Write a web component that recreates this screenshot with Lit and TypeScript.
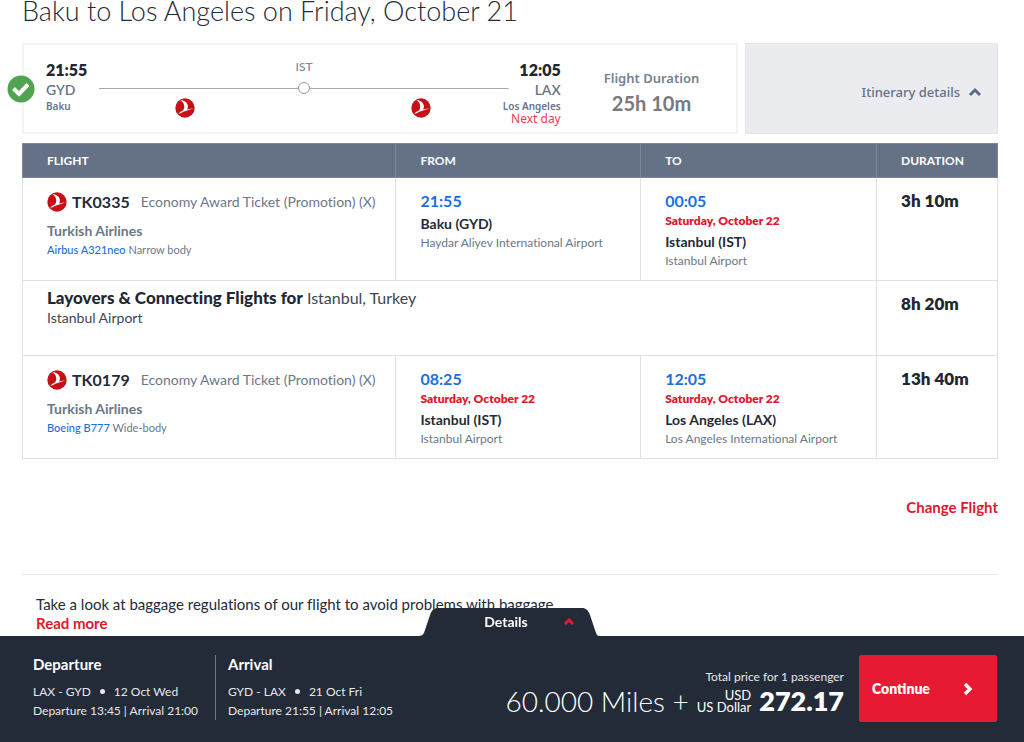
import { LitElement, html, css, svg, nothing } from "lit";
import { customElement, property, state } from "lit/decorators.js";

interface Stop {
  time: string;
  date?: string;
  city: string;
  airport: string;
}

interface Leg {
  flight: string;
  cabin: string;
  carrier: string;
  aircraft: string;
  body: string;
  from: Stop;
  to: Stop;
  duration: string;
}

const FIRST: Leg = {
  flight: "TK0335",
  cabin: "Economy Award Ticket (Promotion) (X)",
  carrier: "Turkish Airlines",
  aircraft: "Airbus A321neo",
  body: "Narrow body",
  from: { time: "21:55", city: "Baku (GYD)", airport: "Haydar Aliyev International Airport" },
  to: { time: "00:05", date: "Saturday, October 22", city: "Istanbul (IST)", airport: "Istanbul Airport" },
  duration: "3h 10m",
};

const SECOND: Leg = {
  flight: "TK0179",
  cabin: "Economy Award Ticket (Promotion) (X)",
  carrier: "Turkish Airlines",
  aircraft: "Boeing B777",
  body: "Wide-body",
  from: { time: "08:25", date: "Saturday, October 22", city: "Istanbul (IST)", airport: "Istanbul Airport" },
  to: { time: "12:05", date: "Saturday, October 22", city: "Los Angeles (LAX)", airport: "Los Angeles International Airport" },
  duration: "13h 40m",
};

const logo = html`<svg class="logo" viewBox="0 0 20 20" aria-hidden="true">
  <circle cx="10" cy="10" r="9.7" fill="#c70f17" />
  <path fill="#fff" d="M5.400 2.300C9.500 2.200 12.600 4.800 12.900 8c.1 1.400-.3 2.600-1 3.600l6.800-1.300c-3.800 1.600-7.600 2.300-10.600 3.600-1.800.8-3.200 1.600-4.900 1.900 1.400-1.600 3.200-2.600 4.900-3.300 1-1.600 1.400-3.500.9-5.500-.4-1.900-1.600-3.500-3.600-4.700z" />
</svg>`;

@customElement("flight-summary")
export class FlightSummary extends LitElement {
  @property({ type: Boolean }) open = true;

  static styles = css`
    :host { display: grid; grid-template-columns: minmax(0, 717fr) minmax(0, 253fr); gap: 7px; }
    .card {
      position: relative; box-sizing: border-box; min-height: 91px; padding: 15px 22px 0;
      border: 2px solid #f4f4f5; display: grid;
      grid-template-columns: auto minmax(0, 1fr) auto auto; background: #fff;
    }
    .check { position: absolute; left: -17px; top: 30px; width: 28px; height: 28px; display: block; }
    .end { display: flex; flex-direction: column; color: #687586; font-size: 14px; line-height: 20px; }
    .end.to { align-items: flex-end; }
    .time { font-size: 16px; font-weight: 800; color: #1f2733; }
    .city { font: 600 10px/13px "Noto Sans", sans-serif; }
    .next { font: 400 12px/12px "Noto Sans", sans-serif; color: #ee3a55; }
    .code { font-weight: 600; font-size: 14px; }
    .track { margin: 0 -6px 0 12px; display: flex; flex-direction: column; }
    .via { text-align: center; font-size: 12px; line-height: 14px; color: #808895; font-weight: 500; }
    .line { height: 12px; margin-top: 8px; display: flex; align-items: center; justify-content: center;
      background: linear-gradient(#a8a8a8, #a8a8a8) center / 100% 1px no-repeat; }
    .dot { width: 10px; height: 10px; border: 1px solid #999; border-radius: 50%; background: #fff; }
    .legs { display: flex; justify-content: space-between; padding: 4px 78px 0 76px; }
    .logo { width: 20px; height: 20px; display: block; }
    .total { margin: 0; padding: 9px 15px 0 43px; text-align: center; }
    .total dt { font: 600 13px/18px "Noto Sans", sans-serif; color: #768191; }
    .total dd { margin: 3px 0 0; font-size: 20px; line-height: 26px; font-weight: 700; color: #77797c; }
    .toggle {
      box-sizing: border-box; border: 1px solid #e6e6e8; background: #ebecef; padding: 6px 15px 0;
      display: flex; align-items: center; justify-content: flex-end; gap: 8px;
      font: 500 13px/18px "Noto Sans", sans-serif; color: #647185; cursor: pointer;
    }
    .toggle svg { width: 14px; height: 10px; }
  `;

  render() {
    return html`
      <div class="card">
        <svg class="check" viewBox="0 0 28 28" role="img" aria-label="Selected">
          <circle cx="14" cy="14" r="13.500" fill="#50a451" />
          <path d="M6.500 13.500 12 19 21 9.500" fill="none" stroke="#fff" stroke-width="4" />
        </svg>
        <div class="end">
          <span class="time">21:55</span><span class="code">GYD</span><span class="city">Baku</span>
        </div>
        <div class="track">
          <span class="via">IST</span>
          <div class="line"><span class="dot"></span></div>
          <div class="legs">${logo}${logo}</div>
        </div>
        <div class="end to">
          <span class="time">12:05</span><span class="code">LAX</span><span class="city">Los Angeles</span>
          <span class="next">Next day</span>
        </div>
        <dl class="total">
          <dt>Flight Duration</dt>
          <dd>25h 10m</dd>
        </dl>
      </div>
      <button class="toggle" type="button" aria-expanded=${this.open}
        @click=${() => this.dispatchEvent(new CustomEvent("toggle-details"))}>
        Itinerary details
        <svg viewBox="0 0 14 10" aria-hidden="true">
          <path d="M2 8 7 3l5 5" fill="none" stroke="#5d6b80" stroke-width="3" />
        </svg>
      </button>
    `;
  }
}

@customElement("itinerary-table")
export class ItineraryTable extends LitElement {
  static styles = css`
    :host { display: block; }
    table { width: 100%; border-collapse: collapse; table-layout: fixed; }
    .c-flight { width: 38.3%; }
    .c-from { width: 25.1%; }
    .c-to { width: 24.2%; }
    th {
      height: 33px; padding: 0 24px; background: #647186; border: 1px solid #7e8998;
      color: #fff; text-align: left; font-size: 12px; line-height: 16px; font-weight: 700;
    }
    td { border: 1px solid #e1e1e3; padding: 12px 24px 10px; vertical-align: top; color: #6b7888; }
    .head { display: flex; align-items: center; line-height: 24px; white-space: nowrap; }
    .logo { width: 20px; height: 20px; flex: none; }
    .no { margin: 0 11px 0 5px; font-size: 16px; font-weight: 700; color: #232b38; }
    .cabin { font-size: 14px; line-height: 22px; }
    .carrier { margin-top: 7px; font-size: 14px; line-height: 20px; font-weight: 700; }
    .plane { font-size: 11px; line-height: 17px; }
    a { color: #1a6fe0; text-decoration: none; font-weight: 500; }
    .time { font-size: 16px; line-height: 22px; font-weight: 700; color: #1a6fe0; }
    .date { font-size: 12px; line-height: 18px; font-weight: 800; color: #e0182f; }
    .city { margin-top: 2px; font-size: 14px; line-height: 20px; font-weight: 700; color: #232b38; }
    .airport { font-size: 12px; line-height: 18px; }
    .dur { font-size: 17px; line-height: 22px; font-weight: 800; color: #1f2733; }
    .lay td { height: 60px; padding-top: 6px; padding-bottom: 2px; color: #3d4653; }
    .lay .dur { padding-top: 12px; color: #1f2733; }
    .lay p { margin: 0; font-size: 16px; line-height: 21px; }
    .lay b { font-size: 17px; font-weight: 900; color: #1f2733; }
    .lay .at { font-size: 14px; line-height: 20px; }
  `;

  private stop(s: Stop) {
    return html`<td>
      <div class="time">${s.time}</div>
      ${s.date ? html`<div class="date">${s.date}</div>` : nothing}
      <div class="city">${s.city}</div>
      <div class="airport">${s.airport}</div>
    </td>`;
  }

  private leg(l: Leg) {
    return html`<tr>
      <td>
        <div class="head">${logo}<span class="no">${l.flight}</span><span class="cabin">${l.cabin}</span></div>
        <div class="carrier">${l.carrier}</div>
        <div class="plane"><a href="#aircraft">${l.aircraft}</a> ${l.body}</div>
      </td>
      ${this.stop(l.from)}${this.stop(l.to)}
      <td class="dur">${l.duration}</td>
    </tr>`;
  }

  render() {
    return html`<table>
      <colgroup><col class="c-flight" /><col class="c-from" /><col class="c-to" /><col /></colgroup>
      <thead>
        <tr><th scope="col">FLIGHT</th><th scope="col">FROM</th><th scope="col">TO</th><th scope="col">DURATION</th></tr>
      </thead>
      <tbody>
        ${this.leg(FIRST)}
        <tr class="lay">
          <td colspan="3">
            <p><b>Layovers &amp; Connecting Flights for</b> Istanbul, Turkey</p>
            <p class="at">Istanbul Airport</p>
          </td>
          <td class="dur">8h 20m</td>
        </tr>
        ${this.leg(SECOND)}
      </tbody>
    </table>`;
  }
}

@customElement("price-bar")
export class PriceBar extends LitElement {
  static styles = css`
    :host { display: block; color: #fff; }
    .tab {
      position: absolute; left: 50%; top: -28px; width: 180px; height: 28px; margin-left: -93px; padding: 0;
      border: 0; background: none; color: #fff; font: 700 14px/26px Lato, sans-serif; cursor: pointer;
    }
    .tab svg { position: absolute; inset: 0; width: 180px; height: 28px; }
    .tab span { position: relative; padding-right: 6px; }
    .bar {
      box-sizing: border-box; min-height: 106px; padding: 19px 27px 19px 33px; background: #242b38;
      display: flex; align-items: flex-start;
    }
    .trip { padding-right: 17px; min-height: 65px; }
    .trip + .trip { border-left: 1px solid #6d7785; padding-left: 12px; }
    h2 { margin: 0 0 9px; font-size: 15px; line-height: 18px; font-weight: 700; }
    .trip p { margin: 0; font-size: 12px; line-height: 19px; color: #e6e7e9; display: flex; align-items: center; }
    .pt { width: 5px; height: 5px; margin: 0 9px; border-radius: 50%; background: #e6e7e9; }
    .price { margin-left: auto; padding: 14px 15px 0 0; text-align: right; }
    .note { font-size: 12px; line-height: 16px; color: #e6e7e9; }
    .sum { display: flex; align-items: center; justify-content: flex-end; line-height: 32px; }
    .miles { font-size: 28px; font-weight: 300; margin-right: 8px; }
    .cur { font-size: 13px; line-height: 12px; font-weight: 400; margin-right: 8px; }
    .usd { font-size: 27px; font-weight: 800; }
    .go {
      width: 138px; height: 67px; padding: 0 23px 0 13px; border: 0; border-radius: 2px; background: #e81932; color: #fff;
      display: flex; align-items: center; justify-content: space-between; font: 800 14px/20px Lato, sans-serif; cursor: pointer;
    }
    .go svg { width: 12px; height: 14px; }
  `;

  private trip(title: string, route: string, date: string, times: string) {
    return html`<section class="trip">
      <h2>${title}</h2>
      <p>${route}<span class="pt"></span>${date}</p>
      <p>${times}</p>
    </section>`;
  }

  render() {
    return html`
      <button class="tab" type="button">
        <svg viewBox="0 0 180 28" aria-hidden="true">
          <path fill="#242b38" d="M0 28c4 0 5-3 6-6l5-15C13 2 15 0 19 0H163c4 0 6 2 8 7l5 15c1 3 2 6 4 6Z" />
          ${svg`<path d="m146 16 4-4 4 4" fill="none" stroke="#e81932" stroke-width="3" />`}
        </svg>
        <span>Details</span>
      </button>
      <div class="bar">
        ${this.trip("Departure", "LAX - GYD", "12 Oct Wed", "Departure 13:45 | Arrival 21:00")}
        ${this.trip("Arrival", "GYD - LAX", "21 Oct Fri", "Departure 21:55 | Arrival 12:05")}
        <div class="price">
          <div class="note">Total price for 1 passenger</div>
          <div class="sum">
            <span class="miles">60.000 Miles +</span>
            <span class="cur">USD<br />US Dollar</span>
            <span class="usd">272.17</span>
          </div>
        </div>
        <button class="go" type="button">Continue
          <svg viewBox="0 0 12 14" aria-hidden="true"><path d="m3 2 5 5-5 5" fill="none" stroke="#fff" stroke-width="3.400" /></svg>
        </button>
      </div>
    `;
  }
}

@customElement("app-root")
export class AppRoot extends LitElement {
  @state() private open = true;

  static styles = css`
    :host {
      display: block; font-family: Lato, "Noto Sans", sans-serif; font-variant-ligatures: none;
      color: #232b38; background: #fff;
    }
    main { padding: 0 26px 110px 22px; }
    h1 { margin: 0 0 21px; font-size: 27px; line-height: 22px; font-weight: 300; }
    itinerary-table { margin-top: 9px; }
    .change { display: flex; justify-content: flex-end; padding: 38px 0 57px; font-size: 15px; line-height: 20px; }
    a { color: #e0182f; font-weight: 700; text-decoration: none; }
    .bag { border-top: 1px solid #e6e6e6; padding: 20px 14px 0; font-size: 15px; line-height: 19px; }
    .bag p { margin: 0; }
    price-bar { position: fixed; left: 0; right: 0; bottom: 0; }
  `;

  render() {
    return html`
      <main>
        <h1>Baku to Los Angeles on Friday, October 21</h1>
        <flight-summary .open=${this.open} @toggle-details=${() => (this.open = !this.open)}></flight-summary>
        ${this.open ? html`<itinerary-table></itinerary-table>` : nothing}
        <div class="change"><a href="#change">Change Flight</a></div>
        <div class="bag">
          <p>Take a look at baggage regulations of our flight to avoid problems with baggage.</p>
          <a href="#baggage">Read more</a>
        </div>
      </main>
      <price-bar></price-bar>
    `;
  }
}
